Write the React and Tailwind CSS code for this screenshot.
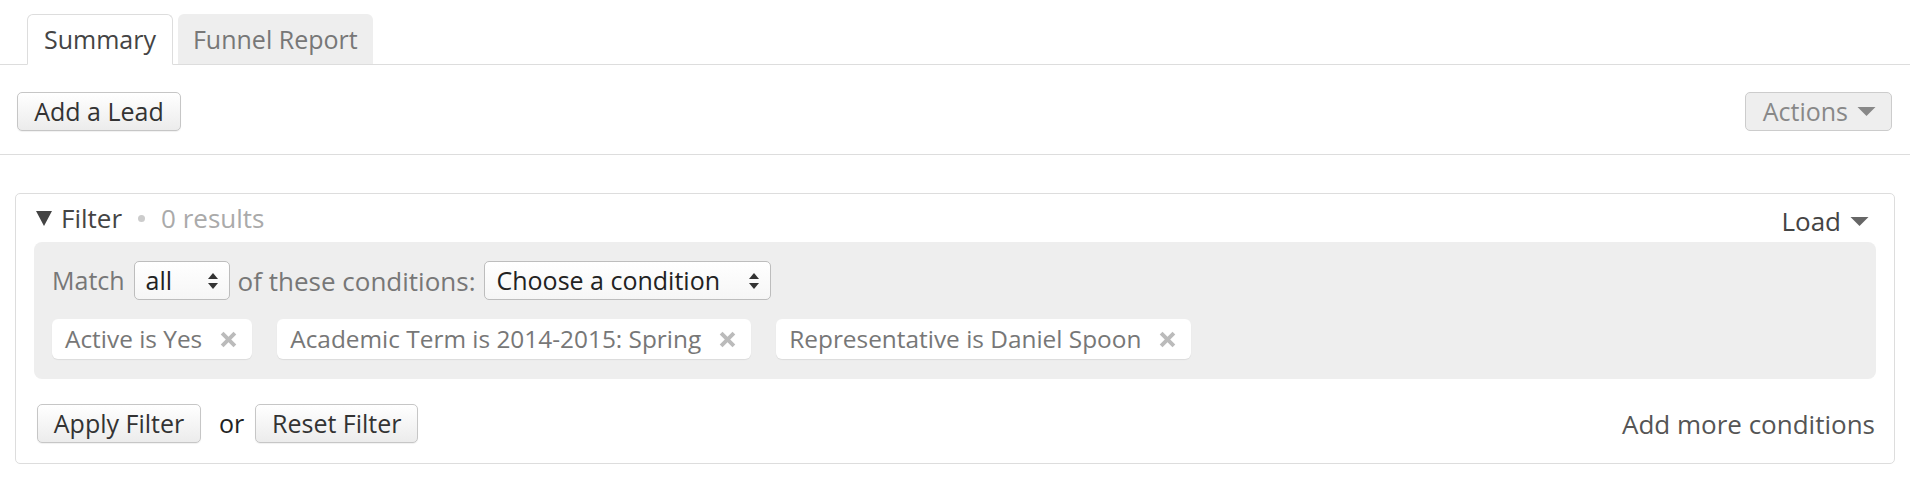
import { useState } from "react";

const Caret = ({ className = "" }) => (
  <svg viewBox="0 0 20 10" className={className} fill="currentColor">
    <polygon points="0,0 20,0 10,10" />
  </svg>
);

const UpDown = () => (
  <svg viewBox="0 0 10 16" className="w-[10px] h-[16px]" fill="#333">
    <polygon points="5,0 10,6 0,6" />
    <polygon points="0,10 10,10 5,16" />
  </svg>
);

const Cross = () => (
  <svg viewBox="0 0 16 16" className="w-[17px] h-[17px]" stroke="#bbb" strokeWidth="3.6" strokeLinecap="butt">
    <line x1="2" y1="2" x2="14" y2="14" />
    <line x1="14" y1="2" x2="2" y2="14" />
  </svg>
);

const Button = ({ children, className = "" }) => (
  <button
    className={
      "h-[39px] px-[13px] rounded-[5px] border border-[#c6c6c6] bg-linear-to-b from-white to-[#ececec] text-[#333] leading-none shadow-[0_1px_1px_rgba(0,0,0,0.06)] " +
      className
    }
  >
    {children}
  </button>
);

const Chip = ({ label }) => (
  <div className="h-[40px] flex items-center gap-[18px] pl-[13px] pr-[15px] bg-white rounded-[6px] shadow-[0_1px_1px_rgba(0,0,0,0.08)] text-[#777] text-[24.4px]">
    <span>{label}</span>
    <Cross />
  </div>
);

const Select = ({ value, className = "" }) => (
  <div
    className={
      "h-[39px] flex items-center justify-between pl-[11px] pr-[11px] bg-linear-to-b from-white to-[#f6f6f6] border border-[#bdbdbd] rounded-[5px] text-[#222] text-[25px] " +
      className
    }
  >
    <span>{value}</span>
    <UpDown />
  </div>
);

export default function App() {
  const [tab, setTab] = useState("summary");
  const conditions = [
    "Active is Yes",
    "Academic Term is 2014-2015: Spring",
    "Representative is Daniel Spoon",
  ];

  return (
    <div className="min-h-[486px] bg-white font-['Open_Sans',sans-serif] text-[25px] leading-none">
      {/* Tabs */}
      <div className="flex items-end gap-[5px] pl-[27px] pt-[14px] border-b border-[#ddd]">
        <div
          onClick={() => setTab("summary")}
          className="h-[51px] -mb-px px-[16px] flex items-center bg-white border border-[#ddd] border-b-white rounded-t-[6px] text-[#444] cursor-pointer"
        >
          Summary
        </div>
        <div
          onClick={() => setTab("funnel")}
          className="h-[50px] px-[15px] flex items-center bg-[#eee] rounded-t-[6px] text-[#777] cursor-pointer"
        >
          Funnel Report
        </div>
      </div>

      {/* Toolbar */}
      <div className="flex items-center justify-between pl-[17px] pr-[18px] pt-[27px] pb-[23px] border-b border-[#ddd]">
        <Button className="w-[164px]">Add a Lead</Button>
        <button className="h-[39px] flex items-center gap-[8px] pl-[17px] pr-[14px] rounded-[5px] border border-[#ccc] bg-[#eee] text-[#888]">
          Actions
          <Caret className="w-[21px] h-[9px] text-[#888]" />
        </button>
      </div>

      {/* Filter panel */}
      <div className="mx-[15px] mt-[38px] border border-[#ddd] rounded-[5px]">
        <div className="h-[48px] flex items-center justify-between pl-[20px] pr-[25px] text-[26px]">
          <div className="flex items-center">
            <svg viewBox="0 0 16 15" className="w-[16px] h-[15px] mr-[9px]" fill="#444">
              <polygon points="0,0 16,0 8,15" />
            </svg>
            <span className="text-[#444]">Filter</span>
            <span className="mx-[16px] w-[7px] h-[7px] rounded-full bg-[#ccc]" />
            <span className="text-[#aaa]">0 results</span>
          </div>
          <div className="flex items-center gap-[9px] text-[#444] pt-[6px]">
            Load
            <Caret className="w-[19px] h-[9px] text-[#666]" />
          </div>
        </div>

        <div className="mx-[18px] bg-[#eee] rounded-[8px] px-[18px] pt-[19px] pb-[20px] flex flex-col gap-[19px]">
          <div className="flex items-center text-[#777]">
            <span>Match</span>
            <Select value="all" className="w-[96px] ml-[9px] mr-[8px]" />
            <span className="text-[26px]">of these conditions:</span>
            <Select value="Choose a condition" className="w-[287px] ml-[9px]" />
          </div>
          <div className="flex items-center gap-[25px]">
            {conditions.map((c) => (
              <Chip key={c} label={c} />
            ))}
          </div>
        </div>

        <div className="flex items-center justify-between pl-[21px] pr-[19px] pt-[25px] pb-[20px]">
          <div className="flex items-center">
            <Button className="w-[164px]">Apply Filter</Button>
            <span className="ml-[18px] mr-[11px] text-[#222]">or</span>
            <Button className="w-[163px]">Reset Filter</Button>
          </div>
          <span className="text-[#555] text-[26px]">Add more conditions</span>
        </div>
      </div>
    </div>
  );
}
